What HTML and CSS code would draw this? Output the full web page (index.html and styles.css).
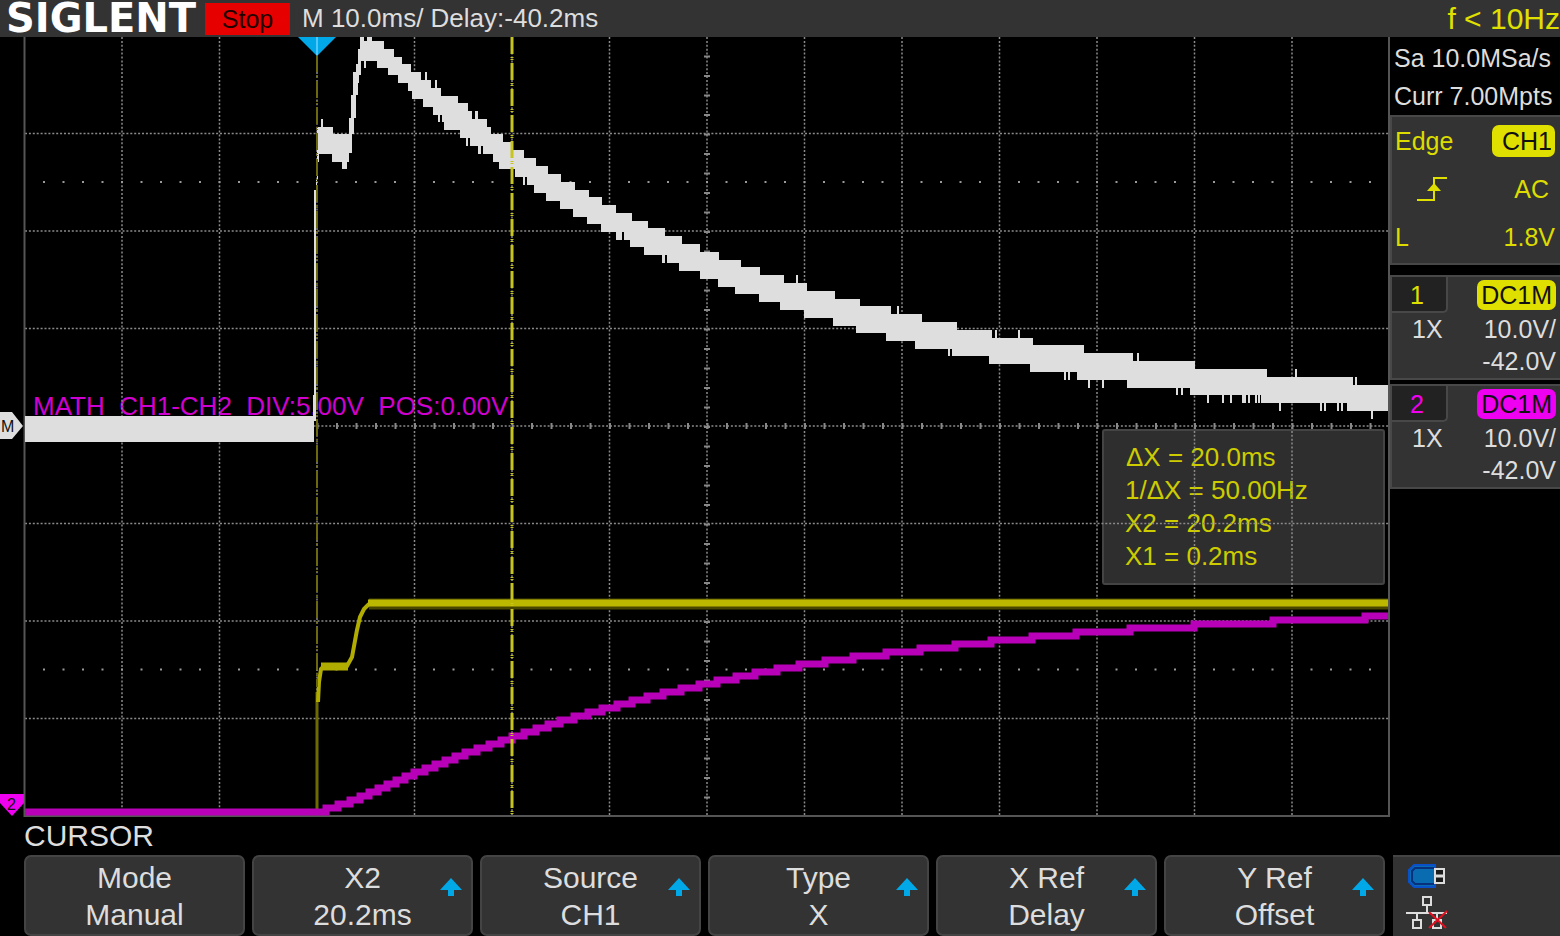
FILE: index.html
```html
<!DOCTYPE html>
<html lang="en">
<head>
    <meta charset="utf-8">
    <title>SIGLENT - Cursor</title>
    <link rel="stylesheet" href="styles.css">
</head>
<body>
    <header class="top-bar">
        <div class="logo">SIGLENT</div>
        <div class="run-state">Stop</div>
        <div class="timebase">M 10.0ms/ Delay:-40.2ms</div>
        <div class="freq">f &lt; 10Hz</div>
    </header>

    <main class="scope">
        <svg class="plot" viewBox="0 0 1390 780">
            <!-- measurement texts, under the grid -->
            <text class="math-label" x="33" y="378">MATH  CH1-CH2  DIV:5.00V  POS:0.00V</text>
            <rect class="readout-box" x="1103" y="393" width="281" height="154" rx="2"/>
            <g class="readout">
                <text x="1126" y="429">ΔX = 20.0ms</text>
                <text x="1125" y="462">1/ΔX = 50.00Hz</text>
                <text x="1125" y="495">X2 = 20.2ms</text>
                <text x="1125" y="528">X1 = 0.2ms</text>
            </g>

            <!-- grid, 14 x 8 divisions of 97.5 -->
            <path class="grid" d="M122 0V779M219.5 0V779M317 0V779M414.5 0V779M512 0V779M609.5 0V779M707 0V779M804.5 0V779M902 0V779M999.5 0V779M1097 0V779M1194.5 0V779M1292 0V779"/>
            <path class="grid" d="M25 96.5H1389M25 194H1389M25 291.5H1389M25 389H1389M25 486.5H1389M25 584H1389M25 681.5H1389"/>
            <path class="dots" d="M43 145H1389M43 632.5H1389"/>
            <path class="ticks" d="M43.5 389H1389M707 18.5V779"/>
            <path class="frame" d="M24.5 0V779H1389V0"/>

            <!-- CH1 -->
            <path class="ch1-edge" d="M317 776V655"/>
            <path class="ch1-rise" d="M318 665L319 645L321 632L324 629H347L352 620L357 593L360 580L364 572L369 567"/>
            <path class="ch1-flat" d="M321 629.5H348"/>
            <path class="ch1-shade" d="M369 567H1388"/>
            <path class="ch1-line" d="M368 566H1388"/>

            <!-- CH2 -->
            <path class="ch2-line" id="ch2"/>

            <!-- MATH -->
            <path class="math" d="M25 379H313V358H314V153H316V143H317V90H321V82H323V90H333V97H349V81H351V58H353V35H356V27H358V12H360V0H364V4H367V0H372V4H384V12H394V20H402V27H411V35H421V43H425V35H427V43H431V51H435V43H437V51H441V59H458V66H468V74H472V82H475V74H478V82H487V90H491V97H503V105H512V113H524V121H536V129H548V137H561V145H575V153H589V160H602V168H616V176H632V184H648V191H665V199H682V207H700V215H719V223H741V230H760V238H784V246H796V238H798V246H807V254H835V262H860V269H891V277H897V269H899V277H922V285H957V293H992V301H995V293H997V301H1018V293H1020V301H1033V308H1084V316H1133V324H1137V316H1139V324H1195V332H1267V340H1295V332H1297V340H1353V348H1355V340H1357V348H1388V374H1373V382H1371V374H1347V366H1343V374H1341V366H1339V374H1337V366H1326V374H1324V366H1322V374H1320V366H1281V374H1279V366H1261V358H1260V366H1258V358H1257V366H1255V358H1250V366H1248V358H1246V366H1242V358H1232V366H1230V358H1224V366H1222V358H1209V366H1207V358H1190V351H1183V358H1181V351H1178V358H1176V351H1127V343H1104V351H1102V343H1090V351H1088V343H1077V335H1070V343H1068V335H1066V343H1064V335H1030V327H989V319H952V312H950V319H948V312H915V304H886V296H856V289H833V281H804V273H780V265H759V257H735V250H718V242H700V234H679V226H667V218H665V226H662V218H644V210H630V203H624V195H622V203H616V195H601V187H587V180H573V172H560V164H546V156H534V148H527V140H525V148H523V140H515V132H499V125H493V117H483V109H481V117H478V109H470V101H468V109H466V101H460V93H444V85H442V78H440V85H438V78H433V70H423V62H412V54H408V46H398V38H388V31H377V24H366V31H364V24H361V38H359V46H358V58H356V81H354V97H352V116H349V125H347V132H342V125H332V117H319V125H318V143H317V161H316V384H314V405H25Z"/>

            <!-- cursors -->
            <path class="cursor x1" d="M317 18V650"/>
            <path class="cursor x2" d="M512 0V778"/>
            <path class="trigger-pos" d="M298 0H336L317 19Z"/>
            <path class="trigger-mid" d="M317 0V18"/>

            <!-- position markers -->
            <path class="mark-math" d="M0 375H12L23 389L12 402H0Z"/>
            <text class="mark-text" x="1" y="395">M</text>
            <path class="mark-ch2" d="M0 757H24V766L12 779L0 766Z"/>
            <text class="mark-text" x="7" y="773">2</text>
        </svg>

        <aside class="side">
            <div class="acquire">
                <div>Sa 10.0MSa/s</div>
                <div>Curr 7.00Mpts</div>
            </div>
            <section class="trigger">
                <div class="row"><span>Edge</span><span class="badge">CH1</span></div>
                <div class="row">
                    <svg class="edge-icon" width="30" height="26" viewBox="0 0 30 26">
                        <path d="M0 24H17V2H30" fill="none" stroke="#e0e000" stroke-width="2"/>
                        <path d="M10 15L17 7L24 15Z" fill="#e0e000"/>
                    </svg>
                    <span class="coupling">AC</span>
                </div>
                <div class="row"><span>L</span><span>1.8V</span></div>
            </section>
            <section class="channel ch1">
                <div class="row"><span class="tab">1</span><span class="badge">DC1M</span></div>
                <div class="row value"><span class="probe">1X</span><span>10.0V/</span></div>
                <div class="row value offset">-42.0V</div>
            </section>
            <section class="channel ch2">
                <div class="row"><span class="tab">2</span><span class="badge">DC1M</span></div>
                <div class="row value"><span class="probe">1X</span><span>10.0V/</span></div>
                <div class="row value offset">-42.0V</div>
            </section>
        </aside>
    </main>

    <h1 class="menu-title">CURSOR</h1>

    <footer class="bottom">
        <nav class="softkeys">
            <button class="key">Mode<br>Manual</button>
            <button class="key">X2<br>20.2ms
                <svg class="up" viewBox="0 0 22 18"><path d="M11 0L22 12H14V18H8V12H0Z"/></svg>
            </button>
            <button class="key">Source<br>CH1
                <svg class="up" viewBox="0 0 22 18"><path d="M11 0L22 12H14V18H8V12H0Z"/></svg>
            </button>
            <button class="key">Type<br>X
                <svg class="up" viewBox="0 0 22 18"><path d="M11 0L22 12H14V18H8V12H0Z"/></svg>
            </button>
            <button class="key">X Ref<br>Delay
                <svg class="up" viewBox="0 0 22 18"><path d="M11 0L22 12H14V18H8V12H0Z"/></svg>
            </button>
            <button class="key">Y Ref<br>Offset
                <svg class="up" viewBox="0 0 22 18"><path d="M11 0L22 12H14V18H8V12H0Z"/></svg>
            </button>
        </nav>
        <div class="io-status">
            <svg width="40" height="26" viewBox="0 0 40 26">
                <path d="M29 2H8L3 7V19L8 24H29Z" fill="#0a6cb0" stroke="#0a50c8" stroke-width="2"/>
                <path d="M28 5H9L6 8V18L9 21H28" fill="none" stroke="#08307c" stroke-width="2"/>
                <path d="M29 6H38V20H29Z" fill="#1c1c1c" stroke="#ddd" stroke-width="2"/>
                <path d="M29 13H38" stroke="#ddd" stroke-width="3"/>
            </svg>
            <svg width="44" height="36" viewBox="0 0 44 36">
                <g fill="none" stroke="#ddd" stroke-width="2">
                    <path d="M17 2H25V10H17ZM21 10V18M0 18H41M11 18V25M7 25H15V33H7ZM31 18V25M27 25H35V33H27Z"/>
                </g>
                <path d="M23 17L40 33M41 16L23 33" fill="none" stroke="#e01020" stroke-width="2"/>
            </svg>
        </div>
    </footer>

    <script>
        // CH2 samples: x, y in plot units
        const samples = [
            [25, 775], [320, 775], [353, 764], [414, 737], [462, 718], [512, 701],
            [560, 685], [609, 671], [658, 658], [707, 647], [755, 637], [804, 628],
            [853, 621], [902, 615], [999, 604], [1097, 595], [1194, 589], [1292, 584], [1389, 580]
        ];
        const STEP = 4; // one ADC level

        let d = 'M25 775';
        let level = 775;
        for (let i = 1; i < samples.length; i++) {
            const [x0, y0] = samples[i - 1];
            const [x1, y1] = samples[i];
            for (let x = x0; x < x1; x++) {
                const y = y0 + (y1 - y0) * (x - x0) / (x1 - x0);
                if (level - y >= STEP / 2) {
                    level -= STEP;
                    d += `H${x}V${level}`;
                }
            }
        }
        document.getElementById('ch2').setAttribute('d', d + 'H1388');
    </script>
</body>
</html>
```

FILE: styles.css
```css
body {
    margin: 0;
    background-color: #000;
    color: #ddd;
    font-family: "Liberation Sans", Arial, sans-serif;
    font-size: 25px;
}

/* top bar */

.top-bar {
    display: flex;
    align-items: center;
    height: 37px;
    background-color: #333;
    font-size: 26px;
}

.logo {
    margin-left: 6px;
    width: 199px;
    font-family: "DejaVu Sans", sans-serif;
    font-size: 40px;
    font-weight: bold;
    line-height: 37px;
    color: #fff;
}

.run-state {
    width: 85px;
    height: 32px;
    line-height: 32px;
    background-color: #e60000;
    color: #200;
    font-size: 25px;
    text-align: center;
}

.timebase {
    margin-left: 12px;
}

.freq {
    margin-left: auto;
    font-size: 30px;
    color: #e0e000;
}

/* plot */

.scope {
    display: grid;
    grid-template-columns: 1fr 170px;
}

.plot {
    display: block;
    width: 100%;
}

.grid {
    fill: none;
    stroke: #8a8a8a;
    stroke-width: 1.5;
    stroke-dasharray: 2 1.9;
}

.dots {
    fill: none;
    stroke: #999;
    stroke-width: 2;
    stroke-dasharray: 2 17.5;
}

.ticks {
    fill: none;
    stroke: #888;
    stroke-width: 6;
    stroke-dasharray: 2 17.5;
}

.frame {
    fill: none;
    stroke: #555;
    stroke-width: 2;
}

.math-label {
    fill: #d000d0;
    font-size: 26px;
    white-space: pre;
}

.readout-box {
    fill: #2e2e2e;
    stroke: #444;
    stroke-width: 2;
}

.readout {
    fill: #cccc00;
    font-size: 26px;
}

.ch1-edge {
    stroke: #6e6a00;
    stroke-width: 3;
}

.ch1-rise {
    fill: none;
    stroke: #b0ac00;
    stroke-width: 4;
}

.ch1-flat {
    stroke: #b0ac00;
    stroke-width: 8;
}

.ch1-shade {
    stroke: #4a4800;
    stroke-width: 11;
}

.ch1-line {
    stroke: #bcb800;
    stroke-width: 7;
}

.ch2-line {
    fill: none;
    stroke: #b800b8;
    stroke-width: 7;
}

.math {
    fill: #dedede;
}

.cursor {
    fill: none;
    stroke-dasharray: 17 3 1 1 1 3;
}

.x1 {
    stroke: #6c6810;
    stroke-width: 2;
}

.x2 {
    stroke: #c8c41e;
    stroke-width: 3;
}

.trigger-pos {
    fill: #00a8e8;
}

.trigger-mid {
    stroke: #50c8ff;
    stroke-width: 2;
}

.mark-math {
    fill: #dedede;
}

.mark-ch2 {
    fill: #f000f0;
}

.mark-text {
    fill: #111;
    font-size: 16px;
}

/* side panels */

.acquire {
    height: 76px;
    padding: 2px 0 0 4px;
    line-height: 38px;
    white-space: nowrap;
}

.row {
    display: flex;
    justify-content: space-between;
    align-items: center;
}

.trigger,
.channel {
    box-sizing: border-box;
    background-color: #333;
    border: solid #484848;
    border-width: 2px 0 2px 2px;
}

.trigger {
    height: 150px;
    margin-bottom: 10px;
    padding: 0 5px 0 3px;
    color: #dcdc00;
}

.trigger .row {
    height: 48px;
}

.edge-icon {
    margin-left: 22px;
}

.coupling {
    margin-right: 6px;
}

.badge {
    padding: 0 4px;
    border-radius: 7px;
    line-height: 30px;
    color: #111;
}

.trigger .badge {
    padding: 1px 3px 1px 10px;
    background-color: #e0e000;
}

.channel {
    height: 105px;
    margin-bottom: 4px;
    padding-right: 4px;
}

.tab {
    box-sizing: border-box;
    width: 56px;
    height: 36px;
    padding-right: 4px;
    border: solid #484848;
    border-width: 0 2px 2px 0;
    border-bottom-right-radius: 5px;
    background-color: #222;
    line-height: 36px;
    text-align: center;
}

.ch1 .tab {
    color: #e0e000;
}

.ch1 .badge {
    background-color: #e0e000;
}

.ch2 .tab {
    color: #f000f0;
}

.ch2 .badge {
    background-color: #f000f0;
}

.value {
    height: 32px;
}

.probe {
    margin-left: 20px;
}

.offset {
    justify-content: flex-end;
}

/* bottom menu */

.menu-title {
    margin: 0;
    padding-left: 24px;
    font-size: 30px;
    font-weight: normal;
    line-height: 38px;
}

.bottom {
    display: grid;
    grid-template-columns: 1fr 167px;
    gap: 8px;
}

.softkeys {
    display: grid;
    grid-template-columns: repeat(6, 1fr);
    gap: 7px;
    padding-left: 24px;
}

.key {
    position: relative;
    height: 81px;
    padding: 0;
    border: 2px solid #444;
    border-radius: 7px;
    background-color: #333;
    color: #ddd;
    font: inherit;
    font-size: 30px;
    line-height: 37px;
}

.up {
    position: absolute;
    top: 21px;
    right: 9px;
    width: 22px;
    height: 18px;
    fill: #00a8e8;
}

.io-status {
    display: flex;
    flex-direction: column;
    gap: 6px;
    padding: 6px 0 0 13px;
    border-top: 2px solid #444;
    background-color: #333;
}
```
